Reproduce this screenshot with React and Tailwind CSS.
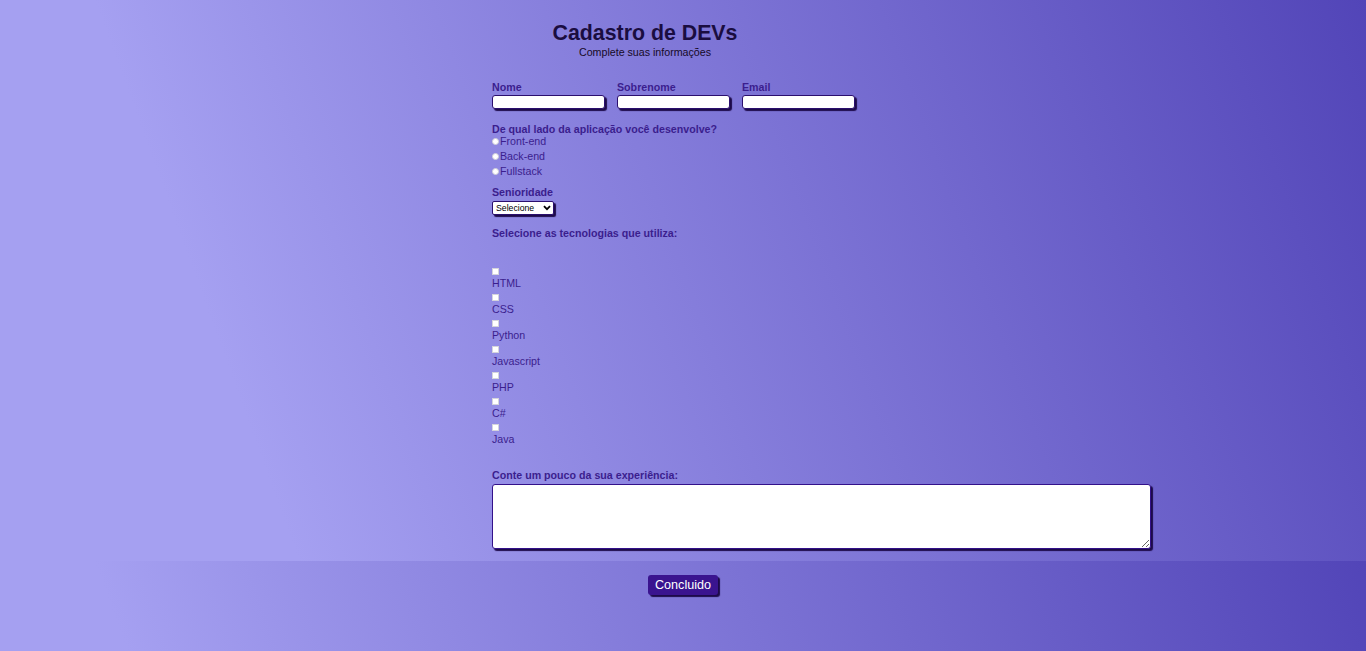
import React from 'react';

const techs = ['HTML', 'CSS', 'Python', 'Javascript', 'PHP', 'C#', 'Java'];
const sides = ['Front-end', 'Back-end', 'Fullstack'];

function Field({ label }) {
    return (
        <div className="flex flex-col w-[113px]">
            <label className="font-bold leading-[12px] text-[#3b1e8e]">{label}</label>
            <input
                type="text"
                className="mt-[2px] h-[14px] w-[113px] bg-white border border-[#2b0f6e] rounded-[3px] shadow-[2px_2px_1px_#1d0a4a] outline-none"
            />
        </div>
    );
}

export default function App() {
    return (
        <div className="min-h-[651px] w-full bg-[linear-gradient(70deg,#a5a0f1_19%,#5245b8)] bg-[length:100%_561px] bg-repeat font-['Liberation_Sans',Arial,sans-serif] text-[10.67px]">
            <div className="pl-[492px] pt-[21px]">
                {/* Header */}
                <header className="w-[306px] text-center">
                    <h1 className="text-[21.33px] leading-[24px] font-bold text-[#1a0d40]">Cadastro de DEVs</h1>
                    <p className="mt-[1px] leading-[12px] text-[#160a28]">Complete suas informações</p>
                </header>

                {/* Name / Email */}
                <div className="mt-[23px] flex gap-[12px]">
                    <Field label="Nome" />
                    <Field label="Sobrenome" />
                    <Field label="Email" />
                </div>

                {/* Side */}
                <p className="mt-[14px] font-bold leading-[12px] text-[#3b1e8e]">De qual lado da aplicação você desenvolve?</p>
                <div className="flex flex-col gap-[3px]">
                    {sides.map((s) => (
                        <label key={s} className="flex items-center leading-[12px] text-[#3b1e8e]">
                            <input
                                type="radio"
                                name="lado"
                                className="appearance-none w-[7px] h-[7px] rounded-full bg-white border border-[#cfcfd8] m-0 mr-[1px]"
                            />
                            {s}
                        </label>
                    ))}
                </div>

                {/* Seniority */}
                <p className="mt-[9px] font-bold leading-[12px] text-[#3b1e8e]">Senioridade</p>
                <div className="relative mt-[3px] w-[62px] h-[14px]">
                    <select className="block appearance-none w-[62px] h-[14px] bg-white border border-[#2b0f6e] rounded-[2px] shadow-[2px_2px_1px_#1d0a4a] text-[8.7px] leading-[12px] pl-[3px] py-0 text-black outline-none">
                        <option>Selecione</option>
                    </select>
                    <svg
                        viewBox="0 0 10 7"
                        className="absolute left-[51px] top-[4px] w-[8px] h-[6px] pointer-events-none"
                    >
                        <path d="M1.2 1.2L5 5l3.8-3.8" fill="none" stroke="#000" strokeWidth="2.2" />
                    </svg>
                </div>

                {/* Techs */}
                <p className="mt-[12px] font-bold leading-[12px] text-[#3b1e8e]">Selecione as tecnologias que utiliza:</p>
                <div className="mt-[24px] flex flex-col">
                    {techs.map((t) => (
                        <div key={t} className="flex flex-col items-start pt-[5px] h-[26px]">
                            <input
                                type="checkbox"
                                className="appearance-none w-[7px] h-[7px] bg-white border border-[#d4d4dc] m-0"
                            />
                            <span className="mt-[2px] leading-[12px] text-[#3b1e8e]">{t}</span>
                        </div>
                    ))}
                </div>

                {/* Experience */}
                <p className="mt-[24px] font-bold leading-[12px] text-[#3b1e8e]">Conte um pouco da sua experiência:</p>
                <textarea className="block mt-[3px] w-[659px] h-[65px] bg-white border border-[#33118a] rounded-[3px] shadow-[2px_2px_1px_#1d0a4a] outline-none" />
            </div>

            <div className="mt-[26px] flex justify-center">
                <button className="w-[70px] h-[20px] bg-[#3a148f] text-white text-[12.6px] leading-[20px] rounded-[3px] shadow-[2px_2px_1px_#1d0a4a]">
                    Concluido
                </button>
            </div>
        </div>
    );
}
